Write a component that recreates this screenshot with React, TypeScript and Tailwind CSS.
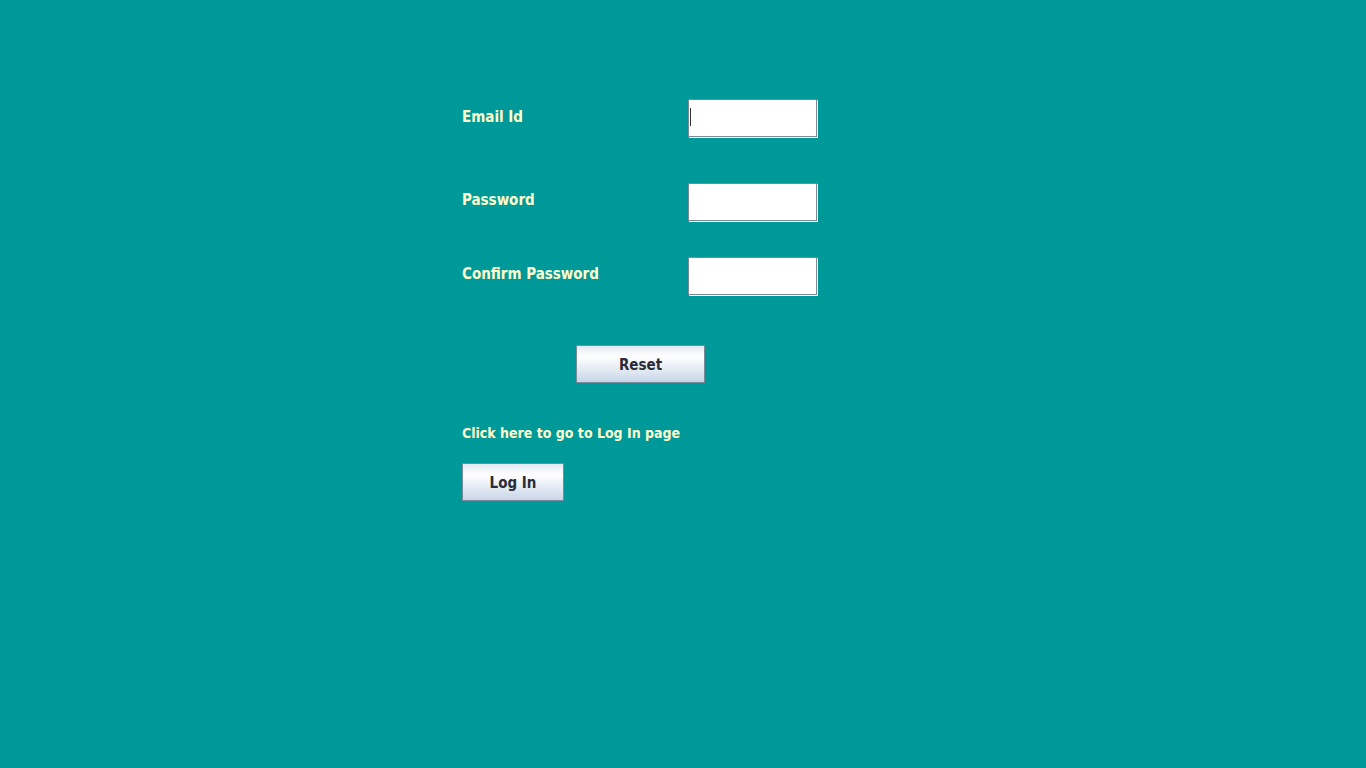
import React from "react";

const font = { fontFamily: '"DejaVu Sans Condensed", "DejaVu Sans", Tahoma, sans-serif' };

function Field({ cursor }: { cursor?: boolean }) {
  return (
    <div className="relative w-[129px] h-[38px] bg-white border border-[#7a8a99] shadow-[1px_1px_0_#ffffff]">
      {cursor && <div className="absolute left-[1px] top-[8px] w-[1px] h-[18px] bg-[#333333]" />}
    </div>
  );
}

function Btn({ label, w }: { label: string; w: string }) {
  return (
    <div
      className={`${w} h-[38px] flex items-center justify-center pt-[2px] border border-[#7a8a99] bg-[linear-gradient(to_bottom,#e4eaf2_0%,#ffffff_30%,#c8d6e8_100%)] text-[#2b2b3a] text-[15px] font-bold`}
    >
      {label}
    </div>
  );
}

export default function App() {
  return (
    <div className="w-[1366px] h-[768px] bg-[#009999]" style={font}>
      <div className="pl-[462px] pt-[99px] flex flex-col">
        <div className="flex items-center h-[38px]">
          <div className="w-[226px] text-[#ffffcc] text-[15px] font-bold -mt-[1px]">Email Id</div>
          <Field cursor />
        </div>
        <div className="flex items-center h-[38px] mt-[46px]">
          <div className="w-[226px] text-[#ffffcc] text-[15px] font-bold -mt-[3px]">Password</div>
          <Field />
        </div>
        <div className="flex items-center h-[38px] mt-[36px]">
          <div className="w-[226px] text-[#ffffcc] text-[15px] font-bold -mt-[3px]">Confirm Password</div>
          <Field />
        </div>
        <div className="mt-[50px] pl-[114px]">
          <Btn label="Reset" w="w-[129px]" />
        </div>
        <div className="mt-[40px] h-[20px] flex items-center text-[#ffffcc] text-[14px] font-bold">
          Click here to go to Log In page
        </div>
        <div className="mt-[20px]">
          <Btn label="Log In" w="w-[102px]" />
        </div>
      </div>
    </div>
  );
}
